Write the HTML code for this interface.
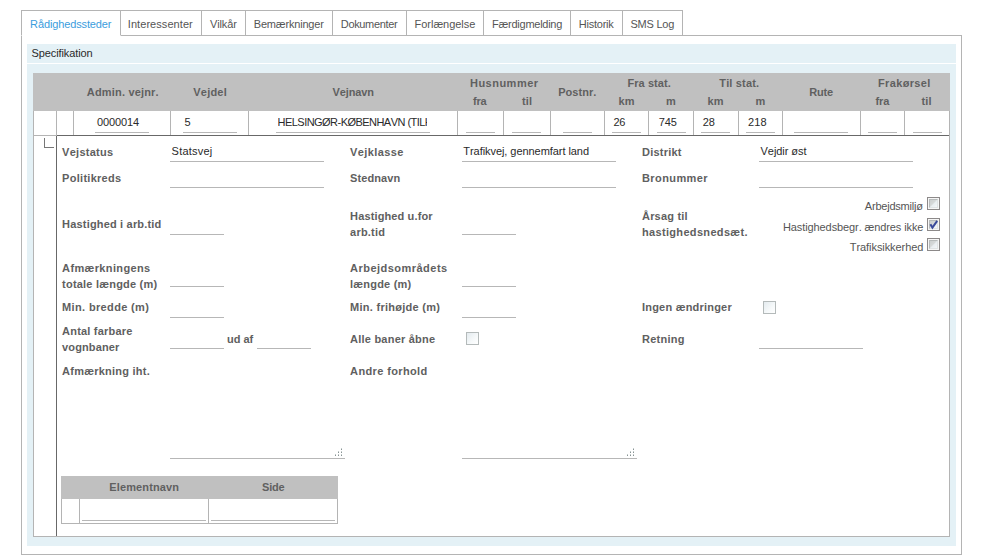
<!DOCTYPE html>
<html lang="da"><head><meta charset="utf-8"><title>Rådighedssteder</title>
<style>
html,body{margin:0;padding:0;background:#fff}
body{width:982px;height:555px;position:relative;overflow:hidden;font-family:"Liberation Sans",Arial,sans-serif;font-size:11px;line-height:14px;color:#555;font-kerning:none;font-feature-settings:"kern" 0,"liga" 0}
div,span{position:absolute;box-sizing:border-box;white-space:nowrap}
.b{font-weight:bold;color:#606060}
.box{border:1px solid #b4b4b4;background:#fff}
.tab{top:10px;height:26px;border:1px solid #b4b4b4;border-left:none;background:#fff}
.tab.act{border-left:1px solid #b4b4b4;border-bottom-color:#fff}
.t{color:#555}
.ta{color:#3b9ddd}
.pan{background:#e4f1f6}
.gh{background:#c0c0c0}
.u{height:1px;background:#b7b7b7}
.v{color:#2a2a2a}
.cb{width:13px;height:13px;border:1px solid #b4baba;background:linear-gradient(135deg,#e4ebef 0%,#f6f9fa 60%,#fff 100%)}
.ccb{width:13px;height:13px;border:1px solid #8c8989;background:#f6f6f6}
.ccb i{position:absolute;box-sizing:border-box;left:1px;top:1px;width:9px;height:9px;border:1px solid;border-color:#b7bbbb #dfe3e4 #dfe3e4 #b7bbbb;background:linear-gradient(135deg,#cbcfcf 0%,#d6d9d9 46%,#e8edf0 54%,#f3f6f8 100%)}
</style></head><body>

<div class="box" style="left:21px;top:35px;width:941px;height:520px"></div>
<div class="tab act" style="left:21px;width:100px"></div>
<div class="ta" style="left:30.10px;top:17px;letter-spacing:-0.13px">Rådighedssteder</div>
<div class="tab" style="left:121px;width:81px"></div>
<div class="t" style="left:127.80px;top:17px;letter-spacing:0.06px">Interessenter</div>
<div class="tab" style="left:202px;width:44px"></div>
<div class="t" style="left:210.10px;top:17px;letter-spacing:-0.15px">Vilkår</div>
<div class="tab" style="left:246px;width:87px"></div>
<div class="t" style="left:253.80px;top:17px;letter-spacing:-0.19px">Bemærkninger</div>
<div class="tab" style="left:333px;width:74px"></div>
<div class="t" style="left:340.80px;top:17px;letter-spacing:-0.34px">Dokumenter</div>
<div class="tab" style="left:407px;width:77px"></div>
<div class="t" style="left:414.60px;top:17px;letter-spacing:-0.04px">Forlængelse</div>
<div class="tab" style="left:484px;width:87px"></div>
<div class="t" style="left:492.10px;top:17px;letter-spacing:-0.26px">Færdigmelding</div>
<div class="tab" style="left:571px;width:52px"></div>
<div class="t" style="left:578.80px;top:17px;letter-spacing:-0.24px">Historik</div>
<div class="tab" style="left:623px;width:60px"></div>
<div class="t" style="left:630.40px;top:17px;letter-spacing:-0.22px">SMS Log</div>
<div class="pan" style="left:27px;top:44px;width:929px;height:502px"></div>
<div style="left:27px;top:63px;width:929px;height:1px;background:#fff"></div>
<div class="v" style="left:31.60px;top:46px;letter-spacing:-0.11px">Specifikation</div>
<div class="box" style="left:33px;top:73px;width:917px;height:464px;border-top:none"></div>
<div class="gh" style="left:33px;top:73px;width:917px;height:38px"></div>
<div class="b" style="left:86.80px;top:85px;letter-spacing:0.18px">Admin. vejnr.</div>
<div class="b" style="left:193.30px;top:85px;letter-spacing:0.21px">Vejdel</div>
<div class="b" style="left:332.50px;top:85px;letter-spacing:-0.12px">Vejnavn</div>
<div class="b" style="left:470.00px;top:76px;letter-spacing:0.48px">Husnummer</div>
<div class="b" style="left:473.00px;top:94px;letter-spacing:-0.22px">fra</div>
<div class="b" style="left:522.00px;top:94px;letter-spacing:0.14px">til</div>
<div class="b" style="left:558.25px;top:85px;letter-spacing:0.03px">Postnr.</div>
<div class="b" style="left:627.50px;top:76px;letter-spacing:0.06px">Fra stat.</div>
<div class="b" style="left:618.42px;top:94px;letter-spacing:0.30px">km</div>
<div class="b" style="left:666.12px;top:94px">m</div>
<div class="b" style="left:719.25px;top:76px;letter-spacing:0.16px">Til stat.</div>
<div class="b" style="left:707.50px;top:94px;letter-spacing:0.13px">km</div>
<div class="b" style="left:755.50px;top:94px">m</div>
<div class="b" style="left:809.25px;top:85px;letter-spacing:-0.19px">Rute</div>
<div class="b" style="left:878.00px;top:76px;letter-spacing:0.35px">Frakørsel</div>
<div class="b" style="left:875.50px;top:94px;letter-spacing:-0.10px">fra</div>
<div class="b" style="left:921.50px;top:94px;letter-spacing:0.14px">til</div>
<div style="left:34px;top:111px;width:915px;height:24px;background:#fff"></div>
<div style="left:56px;top:111px;width:1px;height:24px;background:#b4b4b4"></div>
<div style="left:73px;top:111px;width:1px;height:24px;background:#b4b4b4"></div>
<div style="left:170px;top:111px;width:1px;height:24px;background:#b4b4b4"></div>
<div style="left:248px;top:111px;width:1px;height:24px;background:#b4b4b4"></div>
<div style="left:457px;top:111px;width:1px;height:24px;background:#b4b4b4"></div>
<div style="left:503px;top:111px;width:1px;height:24px;background:#b4b4b4"></div>
<div style="left:550px;top:111px;width:1px;height:24px;background:#b4b4b4"></div>
<div style="left:604px;top:111px;width:1px;height:24px;background:#b4b4b4"></div>
<div style="left:648px;top:111px;width:1px;height:24px;background:#b4b4b4"></div>
<div style="left:693px;top:111px;width:1px;height:24px;background:#b4b4b4"></div>
<div style="left:738px;top:111px;width:1px;height:24px;background:#b4b4b4"></div>
<div style="left:782px;top:111px;width:1px;height:24px;background:#b4b4b4"></div>
<div style="left:860px;top:111px;width:1px;height:24px;background:#b4b4b4"></div>
<div style="left:904px;top:111px;width:1px;height:24px;background:#b4b4b4"></div>
<div class="u" style="left:95px;top:132px;width:54px"></div>
<div class="v" style="left:97.10px;top:115px;letter-spacing:-0.13px">0000014</div>
<div class="u" style="left:183px;top:132px;width:54px"></div>
<div class="v" style="left:184.50px;top:115px">5</div>
<div class="u" style="left:276px;top:132px;width:154px"></div>
<div class="v" style="left:277.60px;top:115px;letter-spacing:-0.54px;width:149.4px;overflow:hidden">HELSINGØR-KØBENHAVN (TILH</div>
<div class="u" style="left:466px;top:132px;width:29px"></div>
<div class="u" style="left:512px;top:132px;width:29px"></div>
<div class="u" style="left:563px;top:132px;width:29px"></div>
<div class="u" style="left:612px;top:132px;width:29px"></div>
<div class="v" style="left:613.47px;top:115px;letter-spacing:-0.30px">26</div>
<div class="u" style="left:657px;top:132px;width:29px"></div>
<div class="v" style="left:658.75px;top:115px;letter-spacing:-0.12px">745</div>
<div class="u" style="left:701px;top:132px;width:29px"></div>
<div class="v" style="left:702.84px;top:115px;letter-spacing:-0.30px">28</div>
<div class="u" style="left:746px;top:132px;width:29px"></div>
<div class="v" style="left:748.00px;top:115px;letter-spacing:0.13px">218</div>
<div class="u" style="left:794px;top:132px;width:54px"></div>
<div class="u" style="left:868px;top:132px;width:29px"></div>
<div class="u" style="left:913px;top:132px;width:29px"></div>
<div style="left:56px;top:135px;width:893px;height:401px;background:#fff;border-left:1px solid #686868;border-top:1px solid #686868"></div>
<div style="left:33px;top:135px;width:24px;height:1px;background:#b4b4b4"></div>
<div style="left:44px;top:138px;width:10px;height:10px;border-left:1px solid #777;border-bottom:1px solid #777"></div>
<div class="b" style="left:62.10px;top:145px;letter-spacing:0.26px">Vejstatus</div>
<div class="b" style="left:62.10px;top:171px;letter-spacing:0.28px">Politikreds</div>
<div class="b" style="left:62.10px;top:217px;letter-spacing:0.18px">Hastighed i arb.tid</div>
<div class="b" style="left:62.10px;top:261px;letter-spacing:0.36px">Afmærkningens</div>
<div class="b" style="left:62.10px;top:277px;letter-spacing:0.21px">totale længde (m)</div>
<div class="b" style="left:62.10px;top:300px;letter-spacing:0.35px">Min. bredde (m)</div>
<div class="b" style="left:62.10px;top:324px;letter-spacing:0.20px">Antal farbare</div>
<div class="b" style="left:62.10px;top:340px;letter-spacing:0.12px">vognbaner</div>
<div class="b" style="left:62.10px;top:364px;letter-spacing:0.24px">Afmærkning iht.</div>
<div class="b" style="left:350.10px;top:145px;letter-spacing:0.39px">Vejklasse</div>
<div class="b" style="left:350.10px;top:171px;letter-spacing:0.09px">Stednavn</div>
<div class="b" style="left:350.10px;top:209px;letter-spacing:0.13px">Hastighed u.for</div>
<div class="b" style="left:350.10px;top:225px;letter-spacing:0.21px">arb.tid</div>
<div class="b" style="left:350.10px;top:261px;letter-spacing:0.47px">Arbejdsområdets</div>
<div class="b" style="left:350.10px;top:277px;letter-spacing:0.20px">længde (m)</div>
<div class="b" style="left:350.10px;top:300px;letter-spacing:0.27px">Min. frihøjde (m)</div>
<div class="b" style="left:350.10px;top:332px;letter-spacing:0.22px">Alle baner åbne</div>
<div class="b" style="left:350.10px;top:364px;letter-spacing:0.37px">Andre forhold</div>
<div class="b" style="left:642.00px;top:145px;letter-spacing:0.22px">Distrikt</div>
<div class="b" style="left:642.00px;top:171px;letter-spacing:0.40px">Bronummer</div>
<div class="b" style="left:642.00px;top:209px;letter-spacing:0.19px">Årsag til</div>
<div class="b" style="left:642.00px;top:225px;letter-spacing:0.33px">hastighedsnedsæt.</div>
<div class="b" style="left:642.00px;top:300px;letter-spacing:0.21px">Ingen ændringer</div>
<div class="b" style="left:642.00px;top:332px;letter-spacing:0.26px">Retning</div>
<div class="b" style="left:227.00px;top:332px;letter-spacing:-0.03px">ud af</div>
<div class="u" style="left:170px;top:161px;width:154px"></div>
<div class="v" style="left:171.60px;top:144px;letter-spacing:0.21px">Statsvej</div>
<div class="u" style="left:170px;top:187px;width:154px"></div>
<div class="u" style="left:462px;top:161px;width:154px"></div>
<div class="v" style="left:463.35px;top:144px;letter-spacing:-0.06px">Trafikvej, gennemfart land</div>
<div class="u" style="left:462px;top:187px;width:154px"></div>
<div class="u" style="left:759px;top:161px;width:154px"></div>
<div class="v" style="left:760.60px;top:144px;letter-spacing:-0.06px">Vejdir øst</div>
<div class="u" style="left:759px;top:187px;width:154px"></div>
<div class="u" style="left:170px;top:234px;width:54px"></div>
<div class="u" style="left:462px;top:234px;width:54px"></div>
<div class="u" style="left:170px;top:286px;width:54px"></div>
<div class="u" style="left:462px;top:286px;width:54px"></div>
<div class="u" style="left:170px;top:317px;width:54px"></div>
<div class="u" style="left:462px;top:317px;width:54px"></div>
<div class="u" style="left:170px;top:348px;width:54px"></div>
<div class="u" style="left:257px;top:348px;width:54px"></div>
<div class="u" style="left:759px;top:348px;width:104px"></div>
<div class="u" style="left:170px;top:458px;width:175px"></div>
<div class="u" style="left:462px;top:458px;width:175px"></div>
<svg style="position:absolute;left:335px;top:448px" width="8" height="8" viewBox="0 0 8 8"><rect x="6" y="0" width="1" height="1" fill="#c0c8c8"/><rect x="6" y="1" width="1" height="1" fill="#889494"/><rect x="3" y="3" width="1" height="1" fill="#c0c8c8"/><rect x="3" y="4" width="1" height="1" fill="#889494"/><rect x="6" y="3" width="1" height="1" fill="#c0c8c8"/><rect x="6" y="4" width="1" height="1" fill="#889494"/><rect x="0" y="6" width="1" height="1" fill="#c0c8c8"/><rect x="0" y="7" width="1" height="1" fill="#889494"/><rect x="3" y="6" width="1" height="1" fill="#c0c8c8"/><rect x="3" y="7" width="1" height="1" fill="#889494"/><rect x="6" y="6" width="1" height="1" fill="#c0c8c8"/><rect x="6" y="7" width="1" height="1" fill="#889494"/></svg>
<svg style="position:absolute;left:627px;top:448px" width="8" height="8" viewBox="0 0 8 8"><rect x="6" y="0" width="1" height="1" fill="#c0c8c8"/><rect x="6" y="1" width="1" height="1" fill="#889494"/><rect x="3" y="3" width="1" height="1" fill="#c0c8c8"/><rect x="3" y="4" width="1" height="1" fill="#889494"/><rect x="6" y="3" width="1" height="1" fill="#c0c8c8"/><rect x="6" y="4" width="1" height="1" fill="#889494"/><rect x="0" y="6" width="1" height="1" fill="#c0c8c8"/><rect x="0" y="7" width="1" height="1" fill="#889494"/><rect x="3" y="6" width="1" height="1" fill="#c0c8c8"/><rect x="3" y="7" width="1" height="1" fill="#889494"/><rect x="6" y="6" width="1" height="1" fill="#c0c8c8"/><rect x="6" y="7" width="1" height="1" fill="#889494"/></svg>
<div class="cb" style="left:763px;top:301px"></div>
<div class="cb" style="left:466px;top:332px"></div>
<div class="ccb" style="left:927px;top:197px"><i></i></div>
<div class="ccb" style="left:927px;top:218px"><i></i></div>
<svg style="position:absolute;left:927px;top:218px" width="13" height="13" viewBox="0 0 13 13"><path d="M3.4 6.3 L5.4 9.6 L10.2 2.9" fill="none" stroke="#3a4a9a" stroke-width="2"/></svg>
<div class="ccb" style="left:927px;top:238px"><i></i></div>
<div class="t" style="left:864.80px;top:199px;letter-spacing:-0.21px">Arbejdsmiljø</div>
<div class="t" style="left:783.00px;top:220px;letter-spacing:-0.10px">Hastighedsbegr. ændres ikke</div>
<div class="t" style="left:849.80px;top:240px;letter-spacing:-0.07px">Trafiksikkerhed</div>
<div class="box" style="left:61px;top:476px;width:277px;height:48px;border-top:none"></div>
<div class="gh" style="left:61px;top:476px;width:277px;height:23px"></div>
<div style="left:79px;top:499px;width:1px;height:24px;background:#b4b4b4"></div>
<div style="left:208px;top:499px;width:1px;height:24px;background:#b4b4b4"></div>
<div class="b" style="left:109.25px;top:480px;letter-spacing:0.13px">Elementnavn</div>
<div class="b" style="left:262.10px;top:480px;letter-spacing:-0.24px">Side</div>
<div class="u" style="left:82px;top:520px;width:124px"></div>
<div class="u" style="left:211px;top:520px;width:124px"></div>
</body></html>
